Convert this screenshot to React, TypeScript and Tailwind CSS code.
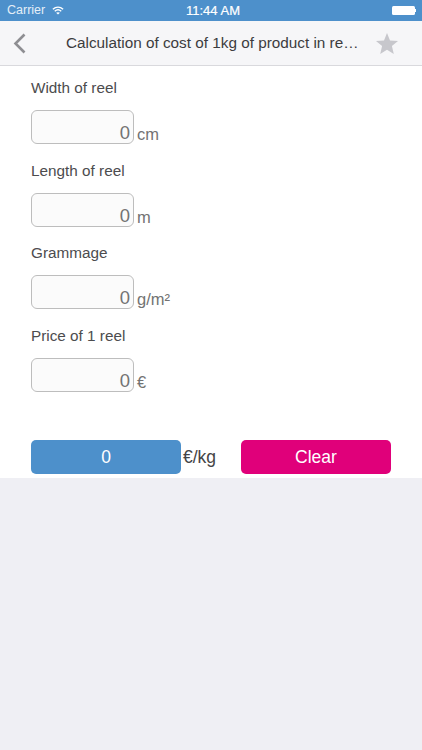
import React from 'react';

const fields = [
  { label: 'Width of reel', unit: 'cm' },
  { label: 'Length of reel', unit: 'm' },
  { label: 'Grammage', unit: 'g/m²' },
  { label: 'Price of 1 reel', unit: '€' },
];

const StatusBar = () => (
  <div className="flex h-[21px] items-center justify-between bg-[#4d90cb] pl-[7px] pr-[6px] text-[12.5px] text-white">
    <div className="flex items-center gap-[7px]">
      <span className="text-[#e4eef7]">Carrier</span>
      <svg width="12" height="9" viewBox="0 0 14 10" fill="none" stroke="white" strokeWidth="1.6">
        <path d="M1 3.6C4.6 .4 9.4 .4 13 3.6" />
        <path d="M3.2 5.8C5.4 3.9 8.6 3.9 10.8 5.8" />
        <path d="M7 9.8 4.8 7.6C6 6.7 8 6.7 9.2 7.6Z" fill="white" stroke="none" />
      </svg>
    </div>
    <span className="absolute left-[4px] right-0 text-center text-[13px] [-webkit-text-stroke:0.2px_white]">11:44 AM</span>
    <div className="flex items-center">
      <div className="h-[9px] w-[23px] rounded-[1.5px] bg-white" />
      <div className="h-[3px] w-[1.5px] bg-white" />
    </div>
  </div>
);

const NavBar = () => (
  <div className="flex h-[45px] items-center border-b border-[#d9d9dd] bg-[#f6f6f8]">
    <svg className="ml-[13px] shrink-0" width="13" height="21" viewBox="0 0 13 21" fill="none" stroke="#8e8e92" strokeWidth="2.6">
      <path d="M11.5 1.5 2.5 10.5 11.5 19.5" />
    </svg>
    <div className="ml-[40px] w-[293px] shrink-0 whitespace-nowrap text-[15.3px] text-[#3c3c3e]">
      Calculation of cost of 1kg of product in re…
    </div>
    <svg className="ml-[17px] shrink-0" width="22" height="21" viewBox="0 0 22 21" fill="#c7c7cc">
      <path d="M11 0 14 7.4 22 8 15.9 13.1 17.8 21 11 16.7 4.2 21 6.1 13.1 0 8 8 7.4Z" />
    </svg>
  </div>
);

const Field = ({ label, unit }: { label: string; unit: string }) => (
  <div className="h-[82.5px]">
    <div className="h-[44px] pt-[13px] text-[15.3px] leading-[18px] text-[#4c4c4e]">{label}</div>
    <div className="flex items-end">
      <div className="flex h-[34px] w-[103px] items-end justify-end rounded-[6px] border border-[#bdbdbd] bg-[#fbfbfb] pr-[3px] text-[18.5px] leading-[21px] text-[#737373]">
        0
      </div>
      <span className="ml-[3px] text-[16.5px] leading-[19px] text-[#737373]">{unit}</span>
    </div>
  </div>
);

export default function App() {
  return (
    <div className="relative flex h-[750px] w-[422px] flex-col overflow-hidden bg-[#efeff4] font-['Liberation_Sans',sans-serif]">
      <StatusBar />
      <NavBar />
      <div className="h-[412px] bg-white px-[31px]">
        {fields.map(field => (
          <Field key={field.label} label={field.label} unit={field.unit} />
        ))}
        <div className="mt-[44px] flex items-center">
          <div className="flex h-[34px] w-[150px] items-center justify-center rounded-[5px] bg-[#4d90cb] pt-[1px] text-[17.5px] text-white">0</div>
          <span className="ml-[2px] w-[58px] pt-[1px] text-[17.5px] text-[#444446]">€/kg</span>
          <button className="h-[34px] w-[150px] rounded-[5px] bg-[#e0007a] pt-[1px] text-[17.5px] text-white">Clear</button>
        </div>
      </div>
    </div>
  );
}
